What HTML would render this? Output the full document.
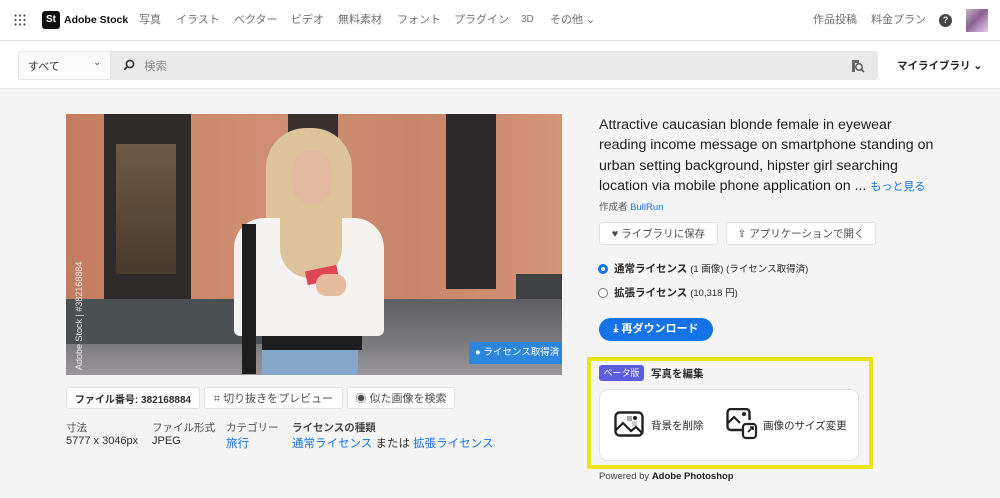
<!DOCTYPE html>
<html><head><meta charset="utf-8">
<style>
*{margin:0;padding:0;box-sizing:border-box}
body{width:1000px;height:498px;overflow:hidden;background:#f4f4f4;font-family:"Liberation Sans","Noto Sans CJK JP",sans-serif;color:#2c2c2c;position:relative}
.a{position:absolute}
.hdr{left:0;top:0;width:1000px;height:41px;background:#fff;border-bottom:1px solid #e1e1e1}
.nav{top:13px;font-size:11px;color:#707070;line-height:14px}
.sb{left:0;top:41px;width:1000px;height:48px;background:#fff;border-bottom:1px solid #e6e6e6}
.btn{background:#fff;border:1px solid #e1e1e1;border-radius:3px;font-size:11px;color:#4b4b4b;display:flex;align-items:center;justify-content:center;white-space:nowrap}
.lbl{font-size:10.5px;color:#4b4b4b}
.val{font-size:11.5px;color:#2c2c2c}
.link{color:#1473e6}
</style></head><body>
<div class="a hdr"></div>
<svg class="a" style="left:14px;top:14px" width="12" height="12" viewBox="0 0 12 12" fill="#555"><circle cx="1.5" cy="1.5" r="1.1"/><circle cx="6" cy="1.5" r="1.1"/><circle cx="10.5" cy="1.5" r="1.1"/><circle cx="1.5" cy="6" r="1.1"/><circle cx="6" cy="6" r="1.1"/><circle cx="10.5" cy="6" r="1.1"/><circle cx="1.5" cy="10.5" r="1.1"/><circle cx="6" cy="10.5" r="1.1"/><circle cx="10.5" cy="10.5" r="1.1"/></svg>
<div class="a" style="left:42px;top:11px;width:18px;height:18px;background:#111;border-radius:3px;color:#fff;font-size:10px;font-weight:bold;text-align:center;line-height:18px">St</div>
<div class="a" style="left:64px;top:14px;font-size:10.5px;font-weight:bold;color:#111;line-height:13px">Adobe Stock</div>
<div class="a nav" style="left:139px">写真</div>
<div class="a nav" style="left:176px">イラスト</div>
<div class="a nav" style="left:234px">ベクター</div>
<div class="a nav" style="left:291px">ビデオ</div>
<div class="a nav" style="left:338px">無料素材</div>
<div class="a nav" style="left:397px">フォント</div>
<div class="a nav" style="left:454px">プラグイン</div>
<div class="a nav" style="left:521px;font-size:10px">3D</div>
<div class="a nav" style="left:550px">その他 ⌄</div>
<div class="a nav" style="left:813px">作品投稿</div>
<div class="a nav" style="left:871px">料金プラン</div>
<div class="a" style="left:939px;top:14px;width:13px;height:13px;border-radius:50%;background:#444;color:#fff;font-size:9px;font-weight:bold;text-align:center;line-height:13px">?</div>
<div class="a" style="left:966px;top:9px;width:22px;height:23px;background:linear-gradient(135deg,#c8b5cd,#8a5f93 45%,#b596bf 70%,#dccbe0)"></div>

<div class="a sb"></div>
<div class="a" style="left:18px;top:51px;width:860px;height:29px;background:#e9e9e9;border-radius:3px"></div>
<div class="a" style="left:18px;top:51px;width:93px;height:29px;background:#fafafa;border:1px solid #e6e6e6;border-radius:3px 0 0 3px"></div>
<div class="a" style="left:28px;top:58px;font-size:11px;color:#333">すべて</div>
<div class="a" style="left:93px;top:57px;font-size:10px;color:#555">⌄</div>
<svg class="a" style="left:123px;top:59px" width="12" height="12" viewBox="0 0 12 12"><circle cx="7" cy="5" r="3.6" fill="none" stroke="#333" stroke-width="1.6"/><path d="M4.5 7.5L1.2 10.8" stroke="#333" stroke-width="1.8"/></svg>
<div class="a" style="left:144px;top:58px;font-size:11.5px;color:#8e8e8e">検索</div>
<svg class="a" style="left:851px;top:58px" width="14" height="15" viewBox="0 0 14 15"><path d="M1 2h7v3H4v9H1z" fill="#666"/><circle cx="8" cy="9" r="3.2" fill="none" stroke="#555" stroke-width="1.5"/><path d="M10.3 11.3L13 14" stroke="#555" stroke-width="1.6"/></svg>
<div class="a" style="left:897px;top:58px;font-size:10.5px;color:#222;font-weight:bold">マイライブラリ ⌄</div>

<div class="a" style="left:66px;top:114px;width:496px;height:261px;overflow:hidden;background:#c98667">
 <div class="a" style="left:0;top:0;width:496px;height:200px;background:linear-gradient(90deg,#c47c5f,#d08f72 40%,#c78468 70%,#d49478)"></div>
 <div class="a" style="left:38px;top:0;width:87px;height:190px;background:#2f2b2a"></div>
 <div class="a" style="left:50px;top:30px;width:60px;height:130px;background:linear-gradient(#6e5a44,#4a3a2b)"></div>
 <div class="a" style="left:222px;top:0;width:50px;height:130px;background:#3a302d"></div>
 <div class="a" style="left:380px;top:0;width:50px;height:175px;background:#2c2a2b"></div>
 <div class="a" style="left:450px;top:160px;width:46px;height:40px;background:#3f4143"></div>
 <div class="a" style="left:0;top:185px;width:496px;height:76px;background:linear-gradient(#5e5e62,#7c7b80 60%,#9a979c)"></div>
 <div class="a" style="left:0;top:185px;width:250px;height:45px;background:#4b5053"></div>
 <div class="a" style="left:200px;top:14px;width:86px;height:140px;border-radius:40px 40px 24px 24px;background:#dcc39a"></div>
 <div class="a" style="left:226px;top:36px;width:40px;height:54px;border-radius:20px;background:#e2b8a0"></div>
 <div class="a" style="left:168px;top:104px;width:150px;height:118px;border-radius:30px 30px 6px 6px;background:#f3f2f1"></div>
 <div class="a" style="left:214px;top:104px;width:62px;height:60px;background:#dcc39a;border-radius:0 0 30px 30px"></div>
 <div class="a" style="left:176px;top:110px;width:14px;height:150px;background:#1e1e1e"></div>
 <div class="a" style="left:196px;top:222px;width:100px;height:14px;background:#1f1e1e"></div>
 <div class="a" style="left:196px;top:236px;width:96px;height:25px;background:#86a6c7"></div>
 <div class="a" style="left:240px;top:154px;width:32px;height:14px;background:#e04656;transform:rotate(-12deg)"></div>
 <div class="a" style="left:250px;top:160px;width:30px;height:22px;border-radius:10px;background:#e7bba0"></div>
 <div class="a" style="left:8px;top:256px;transform:rotate(-90deg);transform-origin:0 0;font-size:9px;color:#e8e8e8;white-space:nowrap">Adobe Stock | #382168884</div>
 <div class="a" style="left:403px;top:228px;width:93px;height:22px;background:#2d86dd;color:#fff;font-size:9.5px;line-height:22px;padding-left:6px">● ライセンス取得済</div>
</div>

<div class="a btn" style="left:66px;top:387px;width:134px;height:22px;font-weight:bold;color:#2c2c2c;font-size:10px">ファイル番号: 382168884</div>
<div class="a btn" style="left:204px;top:387px;width:139px;height:22px">⌗ 切り抜きをプレビュー</div>
<div class="a btn" style="left:347px;top:387px;width:108px;height:22px">◉ 似た画像を検索</div>
<div class="a lbl" style="left:66px;top:420px">寸法</div>
<div class="a val" style="left:66px;top:435px;font-size:11px">5777 x 3046px</div>
<div class="a lbl" style="left:152px;top:420px">ファイル形式</div>
<div class="a val" style="left:152px;top:435px;font-size:11px">JPEG</div>
<div class="a lbl" style="left:226px;top:420px">カテゴリー</div>
<div class="a val link" style="left:226px;top:435px">旅行</div>
<div class="a lbl" style="left:292px;top:420px;font-weight:bold">ライセンスの種類</div>
<div class="a val" style="left:292px;top:435px"><span class="link">通常ライセンス</span> または <span class="link">拡張ライセンス</span></div>

<div class="a" style="left:599px;top:115px;width:335px;font-size:14.2px;line-height:20.3px;color:#1f1f1f">Attractive caucasian blonde female in eyewear reading income message on smartphone standing on urban setting background, hipster girl searching location via mobile phone application on ... <span class="link" style="font-size:11px">もっと見る</span></div>
<div class="a" style="left:599px;top:199px;font-size:9.5px;color:#555">作成者 <span class="link">BullRun</span></div>
<div class="a btn" style="left:599px;top:222px;width:119px;height:23px;font-size:10.5px">♥ ライブラリに保存</div>
<div class="a btn" style="left:726px;top:222px;width:150px;height:23px;font-size:10.5px">⇪ アプリケーションで開く</div>
<div class="a" style="left:598px;top:264px;width:10px;height:10px;border-radius:50%;border:3px solid #1473e6;background:#fff"></div>
<div class="a" style="left:614px;top:261px;font-size:10.5px"><b>通常ライセンス</b> <span style="font-size:9.5px">(1 画像) (ライセンス取得済)</span></div>
<div class="a" style="left:598px;top:288px;width:10px;height:10px;border-radius:50%;border:1px solid #777;background:#fff"></div>
<div class="a" style="left:614px;top:285px;font-size:10.5px"><b>拡張ライセンス</b> <span style="font-size:9.5px">(10,318 円)</span></div>
<div class="a" style="left:599px;top:318px;width:114px;height:23px;border-radius:12px;background:#1473e6;color:#fff;font-size:11px;font-weight:bold;line-height:23px;text-align:center">⤓ 再ダウンロード</div>

<div class="a" style="left:587px;top:357px;width:286px;height:112px;border:4px solid #ebe415"></div>
<div class="a" style="left:599px;top:365px;width:45px;height:16px;border-radius:3px;background:#5c5ce0;color:#fff;font-size:9px;line-height:16px;text-align:center">ベータ版</div>
<div class="a" style="left:651px;top:366px;font-size:10.5px;font-weight:bold">写真を編集</div>
<div class="a" style="left:599px;top:389px;width:260px;height:72px;background:#fff;border:1px solid #e3e3e3;border-radius:9px"></div>
<svg class="a" style="left:614px;top:411px" width="30" height="26" viewBox="0 0 30 26"><rect x="1.5" y="1.5" width="27" height="23" rx="4" fill="none" stroke="#222" stroke-width="2.4"/><rect x="13" y="5" width="5" height="5" fill="#aaa"/><rect x="18" y="10" width="5" height="5" fill="#ccc"/><path d="M2 19l7-7 8 8 5-4 6 6" fill="none" stroke="#222" stroke-width="2.2"/><circle cx="21" cy="7" r="2" fill="#222"/></svg>
<div class="a" style="left:651px;top:418px;font-size:10.5px">背景を削除</div>
<svg class="a" style="left:726px;top:408px" width="32" height="32" viewBox="0 0 32 32"><path d="M16 22H5a3.5 3.5 0 0 1-3.5-3.5v-14A3.5 3.5 0 0 1 5 1h15a3.5 3.5 0 0 1 3.5 3.5V12" fill="none" stroke="#222" stroke-width="2.4"/><path d="M2 15l6-6 6 6" fill="none" stroke="#222" stroke-width="2.2"/><circle cx="18" cy="6" r="2" fill="#222"/><rect x="17" y="16" width="13" height="14" rx="3" fill="none" stroke="#222" stroke-width="2.2"/><path d="M22 24l5-5m-3 0h3v3" fill="none" stroke="#222" stroke-width="1.6"/></svg>
<div class="a" style="left:763px;top:418px;font-size:10.5px">画像のサイズ変更</div>
<div class="a" style="left:599px;top:471px;font-size:9.5px;color:#444">Powered by <b style="color:#222">Adobe Photoshop</b></div>
</body></html>
